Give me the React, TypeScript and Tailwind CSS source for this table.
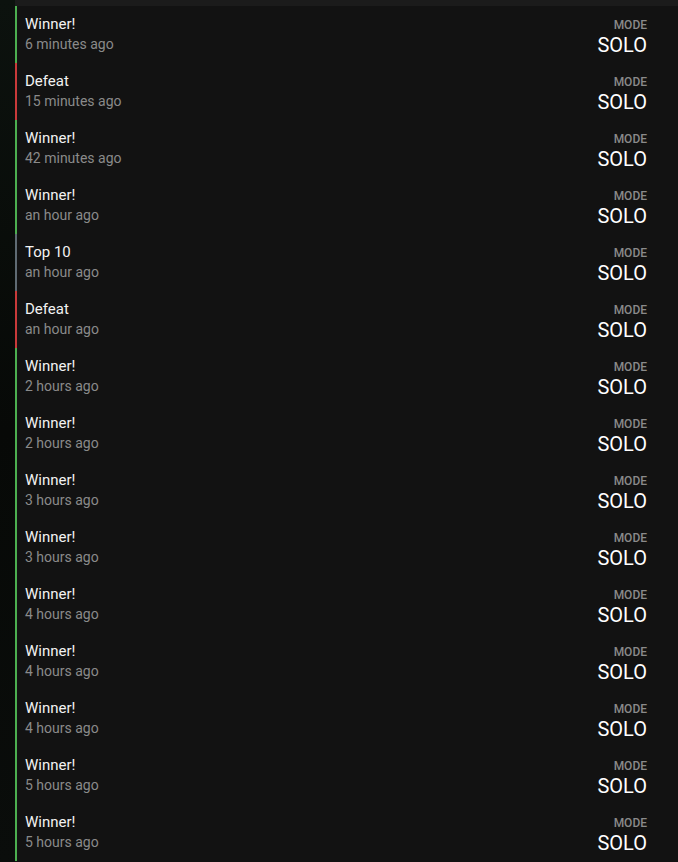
type Match = { result: "Winner!" | "Defeat" | "Top 10"; ago: string };

const matches: Match[] = [
  { result: "Winner!", ago: "6 minutes ago" },
  { result: "Defeat", ago: "15 minutes ago" },
  { result: "Winner!", ago: "42 minutes ago" },
  { result: "Winner!", ago: "an hour ago" },
  { result: "Top 10", ago: "an hour ago" },
  { result: "Defeat", ago: "an hour ago" },
  { result: "Winner!", ago: "2 hours ago" },
  { result: "Winner!", ago: "2 hours ago" },
  { result: "Winner!", ago: "3 hours ago" },
  { result: "Winner!", ago: "3 hours ago" },
  { result: "Winner!", ago: "4 hours ago" },
  { result: "Winner!", ago: "4 hours ago" },
  { result: "Winner!", ago: "4 hours ago" },
  { result: "Winner!", ago: "5 hours ago" },
  { result: "Winner!", ago: "5 hours ago" },
];

const borderFor = {
  "Winner!": "border-[#4caf50]",
  Defeat: "border-[#c93a3a]",
  "Top 10": "border-[#5f6b73]",
};

function MatchRow({ match }: { match: Match }) {
  return (
    <div
      className={`flex h-[57px] items-start justify-between border-l-2 pt-[8px] pr-[31px] pl-2 ${borderFor[match.result]}`}
    >
      <div className="flex flex-col">
        <span className="text-[15px] leading-[20px] text-[#f2f2f2]">
          {match.result}
        </span>
        <span className="text-[14px] leading-[21px] text-[#8a8a8a]">
          {match.ago}
        </span>
      </div>
      <div className="flex flex-col items-end pt-[3px]">
        <span className="text-[12px] leading-[16px] font-medium text-[#8a8a8a]">
          MODE
        </span>
        <span className="text-[20px] leading-[24px] text-white">SOLO</span>
      </div>
    </div>
  );
}

export default function App() {
  return (
    <div
      className="flex h-[862px] w-[678px] overflow-hidden bg-[#0b0e0c]"
      style={{ fontFamily: "Roboto, 'Liberation Sans', sans-serif" }}
    >
      <div className="w-[15px] shrink-0 bg-gradient-to-b from-[#0c120e] via-[#070907] to-[#0a0d0b]" />
      <div className="flex flex-1 flex-col bg-[#121212]">
        <div className="h-[6px] bg-[#1b1b1b]" />
        {matches.map((m, i) => (
          <MatchRow key={i} match={m} />
        ))}
      </div>
    </div>
  );
}
